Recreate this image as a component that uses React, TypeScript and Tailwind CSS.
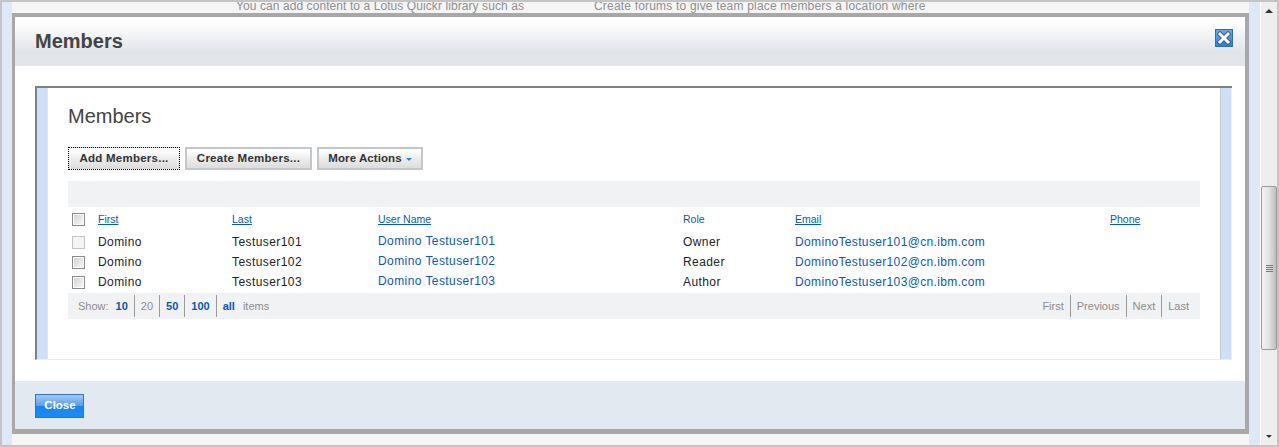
const FONT = "font-['Liberation_Sans',Arial,sans-serif]"

const USERS = [
  { first: 'Domino', last: 'Testuser101', role: 'Owner',  email: 'DominoTestuser101@cn.ibm.com', locked: true },
  { first: 'Domino', last: 'Testuser102', role: 'Reader', email: 'DominoTestuser102@cn.ibm.com', locked: false },
  { first: 'Domino', last: 'Testuser103', role: 'Author', email: 'DominoTestuser103@cn.ibm.com', locked: false },
]

const COLS = 'grid grid-cols-[30px_134px_146px_305px_112px_315px_1fr] items-center'

function CheckBox({ disabled }: { disabled?: boolean }) {
  return (
    <span className={`block h-[13px] w-[13px] border ${disabled ? 'border-[#c4c4c4] bg-[#f4f4f4]' : 'border-[#8a8a8a] bg-white p-[1px]'}`}>
      {!disabled && <span className="block h-full w-full bg-gradient-to-br from-[#d4d4d8] to-[#f6f6f8]" />}
    </span>
  )
}

function Btn({ label, focus, caret, w }: { label: string; focus?: boolean; caret?: boolean; w: string }) {
  return (
    <button
      type="button"
      className={`flex h-[23px] ${w} items-center justify-center gap-[4px] bg-gradient-to-b from-white from-10% via-[#ededed] via-50% to-[#dcdcdc] text-[11.5px] font-bold text-[#333] ${
        caret ? 'tracking-[0.08px]' : 'tracking-[0.25px]'
      } ${focus ? 'border border-dotted border-black' : 'border-2 border-[#c3c7cb]'}`}
    >
      {label}
      {caret && <span className="mt-[1px] h-0 w-0 border-x-[3px] border-t-[3px] border-x-transparent border-t-[#1e88f0]" />}
    </button>
  )
}

function ShowLink({ n, active, last }: { n: string; active?: boolean; last?: boolean }) {
  return (
    <span className={`flex h-[22px] items-center px-[6px] ${last ? '' : 'border-r border-[#9a9a9a]'} ${active ? 'font-bold text-[#0b57b5]' : 'text-[#8c8c8c]'}`}>
      {n}
    </span>
  )
}

function CloseIcon() {
  return (
    <button type="button" className="h-[18px] w-[18px] border border-[#2a6fbe] bg-gradient-to-b from-[#6aa6ea] to-[#2b80dc]">
      <svg viewBox="0 0 16 16" className="block h-4 w-4">
        <path d="M4 4 L12 12 M12 4 L4 12" stroke="#44546a" strokeWidth="4.6" strokeLinecap="square" />
        <path d="M4 4 L12 12 M12 4 L4 12" stroke="#ffffff" strokeWidth="3" strokeLinecap="square" />
      </svg>
    </button>
  )
}

function Scrollbar() {
  return (
    <div className="flex w-[16px] flex-col items-center bg-[#eeeeee]">
      <div className="flex h-[184px] w-full justify-center pt-[7px]">
        <span className="h-0 w-0 border-x-[4px] border-b-[4px] border-x-transparent border-b-[#333]" />
      </div>
      <div className="flex h-[164px] w-full items-center justify-center rounded-[2px] border border-[#9a9a9a] bg-gradient-to-r from-[#f4f4f4] via-[#e2e2e2] to-[#bdbdbd]">
        <span className="flex w-[7px] flex-col gap-[1px]">
          <span className="h-[1px] bg-[#777]" />
          <span className="h-[1px] bg-[#777]" />
          <span className="h-[1px] bg-[#777]" />
          <span className="h-[1px] bg-[#777]" />
        </span>
      </div>
      <div className="flex flex-1 items-end justify-center pb-[7px]">
        <span className="h-0 w-0 border-x-[3px] border-t-[3px] border-x-transparent border-t-[#333]" />
      </div>
    </div>
  )
}

export default function App() {
  return (
    <div className={`${FONT} flex h-[447px] w-[1279px] overflow-hidden border-2 border-[#c4c4c4] bg-[#f5f5f5]`}>
      <div className="w-[10px] bg-[#dfe8f7]" />

      <div className="flex w-[1237px] flex-col">
        {/* page behind the dialog, cut off at the top */}
        <div className="flex h-[11px] items-end overflow-hidden pl-[224px] text-[12px] leading-[14px] text-[#8f8f8f]">
          <span className="w-[358px] shrink-0 tracking-[0.08px]">You can add content to a Lotus Quickr library such as</span>
          <span className="shrink-0 tracking-[0.19px]">Create forums to give team place members a location where</span>
        </div>

        {/* dialog */}
        <div className="flex h-[421px] flex-col border-x-[4px] border-t-[4px] border-b-[5px] border-x-[#a8a8a8] border-y-[#a8a8a8] border-l-[3px] bg-white">
          <div className="flex h-[49px] shrink-0 items-start justify-between bg-gradient-to-b from-white from-10% to-[#e2e5ea] to-70% pl-[20px] pr-[12px]">
            <h1 className="pt-[13px] text-[20px] font-bold leading-[23px] text-[#444]">Members</h1>
            <div className="pt-[12px]"><CloseIcon /></div>
          </div>

          <div className="flex-1 px-[20px] pt-[20px]">
            <div className="flex h-[274px] w-[1197px] border-t-2 border-b border-l-2 border-[#808080] border-b-[#ececec]">
              <div className="w-[11px] border-r border-[#dfe6ef] bg-[#cde0f8]" />
              <div className="flex-1 px-[20px]">
                <h2 className="pt-[17px] text-[20px] leading-[23px] text-[#444]">Members</h2>
                <div className="mt-[19px] flex gap-[5px]">
                  <Btn label="Add Members..." focus w="w-[112px]" />
                  <Btn label="Create Members..." w="w-[127px]" />
                  <Btn label="More Actions" caret w="w-[106px]" />
                </div>
                <div className="mt-[11px] h-[26px] bg-[#f1f2f4]" />

                <div className={`${COLS} mt-[3px] h-[19px] text-[10.5px] text-[#0b57b5]`}>
                  <span className="pl-[4px]"><CheckBox /></span>
                  <a className="underline">First</a>
                  <a className="underline">Last</a>
                  <a className="underline">User Name</a>
                  <span>Role</span>
                  <a className="underline">Email</a>
                  <a className="underline">Phone</a>
                </div>
                <div className="mt-[3px]">
                  {USERS.map(u => (
                    <div key={u.last} className={`${COLS} h-[20px] text-[12px] tracking-[0.42px] text-[#222]`}>
                      <span className="pl-[4px]"><CheckBox disabled={u.locked} /></span>
                      <span>{u.first}</span>
                      <span>{u.last}</span>
                      <a className="-mt-[2px] text-[#0b57b5]">{u.first} {u.last}</a>
                      <span>{u.role}</span>
                      <a className="tracking-[0.35px] text-[#0b57b5]">{u.email}</a>
                      <span />
                    </div>
                  ))}
                </div>

                <div className="mt-[1px] flex h-[26px] items-center justify-between bg-[#f1f2f4] pl-[10px] pr-[5px] text-[11px] text-[#8c8c8c]">
                  <div className="flex items-center">
                    <span className="pr-[1px]">Show:</span>
                    <ShowLink n="10" active />
                    <ShowLink n="20" />
                    <ShowLink n="50" active />
                    <ShowLink n="100" active />
                    <ShowLink n="all" active last />
                    <span className="pl-[2px]">items</span>
                  </div>
                  <div className="flex items-center">
                    <ShowLink n="First" />
                    <ShowLink n="Previous" />
                    <ShowLink n="Next" />
                    <ShowLink n="Last" last />
                  </div>
                </div>
              </div>
              <div className="w-[11px] border-l border-[#c8c8c8] bg-[#cde0f8]" />
              <div className="w-[1px] bg-[#eaf0f8]" />
            </div>
          </div>

          <div className="flex h-[48px] shrink-0 items-start bg-[#e2e9f0] pl-[20px] pt-[13px]">
            <button
              type="button"
              className="h-[24px] w-[49px] border border-[#2a75c4] bg-[linear-gradient(#a6c8f4,#5b9fec_48%,#1c84ee_52%,#1a8cf5)] pl-[1px] text-[11.5px] font-bold text-white"
            >
              Close
            </button>
          </div>
        </div>

        <div className="flex-1" />
      </div>

      <div className="w-[11px] bg-[#dfe8f7]" />
      <div className="w-[1px] bg-white" />
      <Scrollbar />
    </div>
  )
}
